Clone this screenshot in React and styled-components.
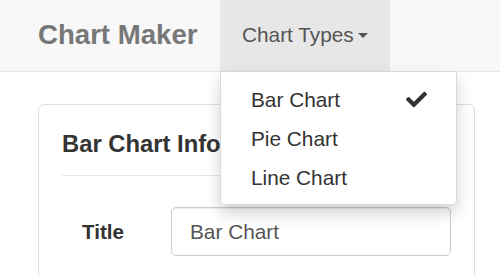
import React from 'react'
import styled, { createGlobalStyle } from 'styled-components'
import { FaCheck } from 'react-icons/fa'

const GlobalStyle = createGlobalStyle`
  *, *::before, *::after {
    box-sizing: border-box;
  }
  html, body {
    margin: 0;
    padding: 0;
    background: #fff;
    font-family: "Liberation Sans", Arial, sans-serif;
    color: #333;
  }
`

const Root = styled.div`
  width: 500px;
  height: 275px;
  overflow: hidden;
  position: relative;
`

const Navbar = styled.div`
  display: flex;
  align-items: stretch;
  height: 72px;
  background: #f8f8f8;
  border-bottom: 1px solid #e7e7e7;
  padding-left: 38px;
`

const Brand = styled.div`
  display: flex;
  align-items: center;
  width: 182px;
  font-size: 27.6px;
  font-weight: bold;
  color: #777;
  padding-bottom: 2px;
`

const NavItem = styled.div`
  position: relative;
  display: flex;
  align-items: center;
  width: 170px;
  padding: 0 0 2px 22px;
  font-size: 20.8px;
  color: #555;
  background: ${p => (p.$open ? '#e7e7e7' : 'transparent')};
`

const Caret = styled.span`
  display: inline-block;
  width: 0;
  height: 0;
  margin-left: 4px;
  margin-top: 2px;
  border-left: 5px solid transparent;
  border-right: 5px solid transparent;
  border-top: 5px solid #555;
`

const Menu = styled.ul`
  position: absolute;
  top: 71px;
  left: 0;
  width: 237px;
  margin: 0;
  padding: 8px 0 7px;
  list-style: none;
  background: #fff;
  border: 1px solid rgba(0, 0, 0, 0.15);
  border-radius: 0 0 5px 5px;
  box-shadow: 0 8px 16px rgba(0, 0, 0, 0.18);
  z-index: 10;
`

const MenuItem = styled.li`
  display: flex;
  align-items: center;
  justify-content: space-between;
  height: 39px;
  padding: 0 29px 0 30px;
  font-size: 20.8px;
  color: #333;
`

const Panel = styled.div`
  width: 437px;
  height: 200px;
  margin: 32px 0 0 38px;
  border: 1px solid #ddd;
  border-radius: 6px;
  padding: 0 23px;
`

const PanelTitle = styled.div`
  font-size: 23.8px;
  font-weight: bold;
  line-height: 30px;
  padding: 24px 0 16px;
  border-bottom: 1px solid #e5e5e5;
  color: #333;
  white-space: nowrap;
`

const FormRow = styled.div`
  display: flex;
  align-items: center;
  margin-top: 31px;
`

const Label = styled.label`
  width: 109px;
  padding-left: 20px;
  font-size: 20.6px;
  font-weight: bold;
  color: #333;
`

const Input = styled.div`
  flex: 1;
  height: 49px;
  display: flex;
  align-items: center;
  padding-left: 18px;
  border: 1px solid #ccc;
  border-radius: 5px;
  box-shadow: inset 0 1px 1px rgba(0, 0, 0, 0.075);
  font-size: 20.8px;
  color: #555;
`

export default function App() {
  return (
    <Root>
      <GlobalStyle />
      <Navbar>
        <Brand>Chart Maker</Brand>
        <NavItem $open>
          Chart Types
          <Caret />
          <Menu>
            <MenuItem>
              Bar Chart
              <FaCheck size={21} color="#333" />
            </MenuItem>
            <MenuItem>Pie Chart</MenuItem>
            <MenuItem>Line Chart</MenuItem>
          </Menu>
        </NavItem>
      </Navbar>
      <Panel>
        <PanelTitle>Bar Chart Info</PanelTitle>
        <FormRow>
          <Label>Title</Label>
          <Input>Bar Chart</Input>
        </FormRow>
      </Panel>
    </Root>
  )
}
